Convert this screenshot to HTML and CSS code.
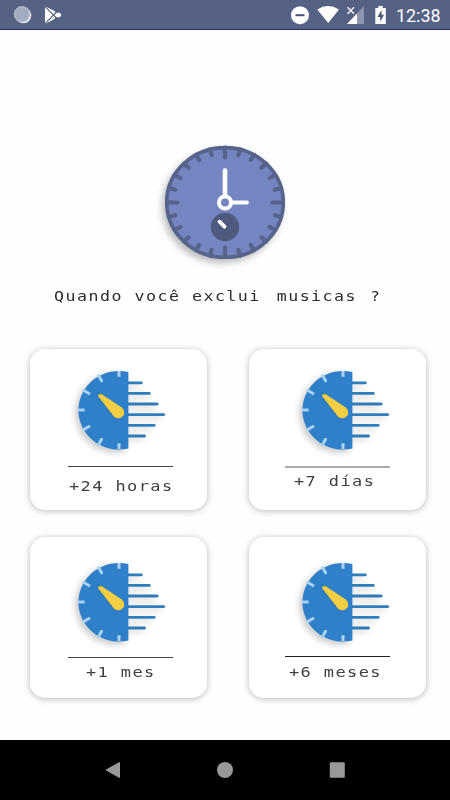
FILE: index.html
```
<!DOCTYPE html>
<html lang="pt">
<head>
	<meta charset="utf-8">
	<title>Quando você exclui musicas ?</title>
	<link rel="stylesheet" href="styles.css">
</head>
<body>

	<!-- shared drawings -->
	<svg class="defs" width="0" height="0">
		<symbol id="timer" viewBox="0 0 100 90">
			<g stroke="#317db9" stroke-width="2.8" stroke-linecap="round">
				<path d="M58 17.8H71.5M58 28.4H79.3M58 39H87.3M58 49.6H93.8M58 60.3H84.3M58 71H74.6"/>
			</g>
			<path d="M58.4 7.1V83.4A40.3 39.3 0 1 1 58.4 7.1Z" fill="#2f80c8"/>
			<g stroke="#a9d2f7" stroke-width="3">
				<path d="M49 6V11.8M49 78.2V84M8.2 45H14.6"/>
				<path d="M28.6 10.6L31.6 15.8M13.8 25.5L19 28.5M13.8 64.5L19 61.5M28.6 79.4L31.6 74.2" stroke-linecap="round"/>
			</g>
			<path d="M28.3 31.5L42.5 51Q46 55.3 51 53L47 46Z" fill="#206a9c"/>
			<path d="M28.4 31.5Q28 28.6 31.3 29L51.8 42.4Q55.8 46.3 53.4 50.5Q49.4 55.4 44 51.8Z" fill="#f3ce43"/>
		</symbol>
	</svg>

	<header class="status">
		<svg width="64" height="29" viewBox="0 0 64 29">
			<circle cx="23.3" cy="15.3" r="8" fill="#f4f6fa"/>
			<circle cx="22" cy="14.3" r="8.2" fill="#a3abbf"/>
			<circle cx="22" cy="14.3" r="7.3" fill="none" stroke="#d5d9e4" stroke-dasharray="1 1.2"/>
			<path d="M45 6.3L54 10.8L56 12.8H60L61.3 15L60 17.2H56L54 19.2L45 24Z" fill="#fff"/>
			<path d="M45 6.7L57 18.5M45 23.6L57 11.5" stroke="#566080" stroke-width="1.1"/>
		</svg>
		<svg class="right" width="106" height="29" viewBox="0 0 106 29">
			<circle cx="10" cy="15.2" r="9" fill="#fff"/>
			<path d="M5.5 15.2H14.5" stroke="#4b5578" stroke-width="2"/>
			<path d="M27.3 9.5Q38 2.7 49 9.5L38.2 23Z" fill="#fff"/>
			<path d="M74 6V24H57Z" fill="#8d96ae"/>
			<path d="M67 13.5V24H57Z" fill="#fff"/>
			<path d="M57.5 7.3L64 13.8M64 7.3L57.5 13.8" stroke="#fff" stroke-width="1.3"/>
			<path d="M85.3 8H88.3V6H92.7V8H95.8V24H85.3Z" fill="#fff"/>
			<path d="M91.5 10L87.5 17H90.2V21.8L94 14.8H91.5Z" fill="#4b5578"/>
		</svg>
		<span class="time">12:38</span>
	</header>

	<main>
		<svg class="clock" width="120" height="114" viewBox="0 0 120 114">
			<ellipse cx="60" cy="57.5" rx="58.3" ry="54.9" fill="#7585c2" stroke="#56638a" stroke-width="3.6"/>
			<g id="ticks" stroke="#56638a" stroke-width="4.2" stroke-linecap="round"></g>
			<path d="M60 57.5V25.5" stroke="#fff" stroke-width="4.6" stroke-linecap="round"/>
			<path d="M60 57.6H82" stroke="#fff" stroke-width="4" stroke-linecap="round"/>
			<circle cx="60" cy="82" r="14.2" fill="#4f5b7e"/>
			<path d="M54.5 76.7L59.5 81.7" stroke="#fff" stroke-width="3.8" stroke-linecap="round"/>
			<circle cx="60" cy="57.5" r="6" fill="#7585c2" stroke="#fff" stroke-width="4"/>
		</svg>

		<h1><span class="first">Quando você exclui</span><span>musicas</span><span>?</span></h1>

		<section class="cards">
			<button type="button" class="card horas">
				<svg class="icon" width="100" height="90"><use href="#timer"/></svg>
				<span class="rule"></span>
				<span class="label">+24 horas</span>
			</button>
			<button type="button" class="card dias">
				<svg class="icon" width="100" height="90"><use href="#timer"/></svg>
				<span class="rule"></span>
				<span class="label">+7 días</span>
			</button>
			<button type="button" class="card mes">
				<svg class="icon" width="100" height="90"><use href="#timer"/></svg>
				<span class="rule"></span>
				<span class="label">+1 mes</span>
			</button>
			<button type="button" class="card meses">
				<svg class="icon" width="100" height="90"><use href="#timer"/></svg>
				<span class="rule"></span>
				<span class="label">+6 meses</span>
			</button>
		</section>
	</main>

	<footer class="nav">
		<svg width="16" height="16" viewBox="0 0 16 16"><path d="M1 8L14.5 .5V15.5Z" fill="#999" stroke="#999" stroke-linejoin="round"/></svg>
		<svg width="16" height="16" viewBox="0 0 16 16"><circle cx="8" cy="8" r="8" fill="#999"/></svg>
		<svg width="16" height="16" viewBox="0 0 16 16"><rect x=".8" y=".3" width="15" height="15.5" rx="1" fill="#999"/></svg>
	</footer>

	<script>
		// 24 marks round the dial, longer on the quarters
		var d = "";
		for(var i = 0; i < 24; i++){
			var a = i * Math.PI / 12;
			var r = i % 6 == 0 ? 0.79 : 0.86;
			d += "M" + (60 + 58 * Math.cos(a)) + " " + (57.5 + 55 * Math.sin(a));
			d += "L" + (60 + 60 * r * Math.cos(a)) + " " + (57.5 + 57 * r * Math.sin(a));
		}
		document.getElementById("ticks").innerHTML = '<path d="' + d + '"/>';
	</script>

</body>
</html>
```
FILE: styles.css
```
body {
	margin: 0;
	height: 800px;
	display: flex;
	flex-direction: column;
	background-color: #fefefe;
	font-family: "DejaVu Sans Mono", monospace;
	overflow: hidden;
}
.defs{
	display: none;
}
.status{
	box-sizing: border-box;
	height: 30px;
	display: flex;
	background-color: #566284;
	border-bottom: 1px solid #28345a;
}
.status .right{
	margin-left: auto;
}
.time{
	width: 44px;
	padding-right: 10px;
	font-family: Roboto, sans-serif;
	font-size: 17.9px;
	line-height: 31px;
	text-align: right;
	white-space: nowrap;
	color: #fff;
}
main{
	flex: 1;
	display: flex;
	flex-direction: column;
	align-items: flex-start;
}
.clock{
	margin: 115px 0 0 165px;
	filter: drop-shadow(-3px 4px 3px rgba(0,0,0,.25));
}
h1{
	display: flex;
	gap: 11px;
	margin: 27px 0 0 53.5px;
	font-size: 14.2px;
	font-weight: normal;
	line-height: 20px;
	letter-spacing: 1.28px;
	white-space: nowrap;
	color: #2c2c2c;
	transform: scaleX(1.17);
	transform-origin: left;
}
.first{
	margin-right: 2.5px;
}
.cards{
	display: grid;
	grid-template-columns: 177px 177px;
	grid-template-rows: 161px 161px;
	gap: 27px 42px;
	margin: 43px 0 0 30px;
}
.card{
	display: flex;
	flex-direction: column;
	padding: 16px 0 0;
	border: none;
	border-radius: 15px;
	background-color: #fff;
	box-shadow: 0 1px 6px rgba(0,0,0,.28);
	font-family: inherit;
	text-align: left;
}
.icon{
	margin-left: 40px;
	filter: drop-shadow(-3px 3px 3px rgba(0,0,0,.2));
}
.rule{
	width: 105px;
	height: 1px;
	margin: 11px 0 0 38px;
	background-color: #444;
}
.label{
	align-self: flex-start;
	margin: 9px 0 0 38.5px;
	font-size: 14.5px;
	line-height: 20px;
	letter-spacing: 1.2px;
	white-space: nowrap;
	color: #404040;
	transform: scaleX(1.17);
	transform-origin: left;
}
.dias .icon, .meses .icon{
	margin-left: 44.5px;
}
.dias .rule, .meses .rule{
	margin-left: 36px;
}
.dias .rule{
	margin-top: 11px;
	height: 2px;
	background-color: #aaa;
}
.dias .label{
	margin: 3px 0 0 45px;
}
.mes, .meses{
	padding-top: 20.4px;
}
.mes .icon, .meses .icon{
	margin-top: -2px;
	padding-top: 2px;
}
.mes .rule{
	margin-top: 9.6px;
}
.mes .label{
	margin: 4px 0 0 55.5px;
}
.meses .rule{
	margin-top: 8.6px;
	background-color: #222;
}
.meses .label{
	margin: 5px 0 0 39.5px;
}
.nav{
	height: 60px;
	display: flex;
	justify-content: center;
	align-items: center;
	gap: 96px;
	background-color: #000;
}
```
